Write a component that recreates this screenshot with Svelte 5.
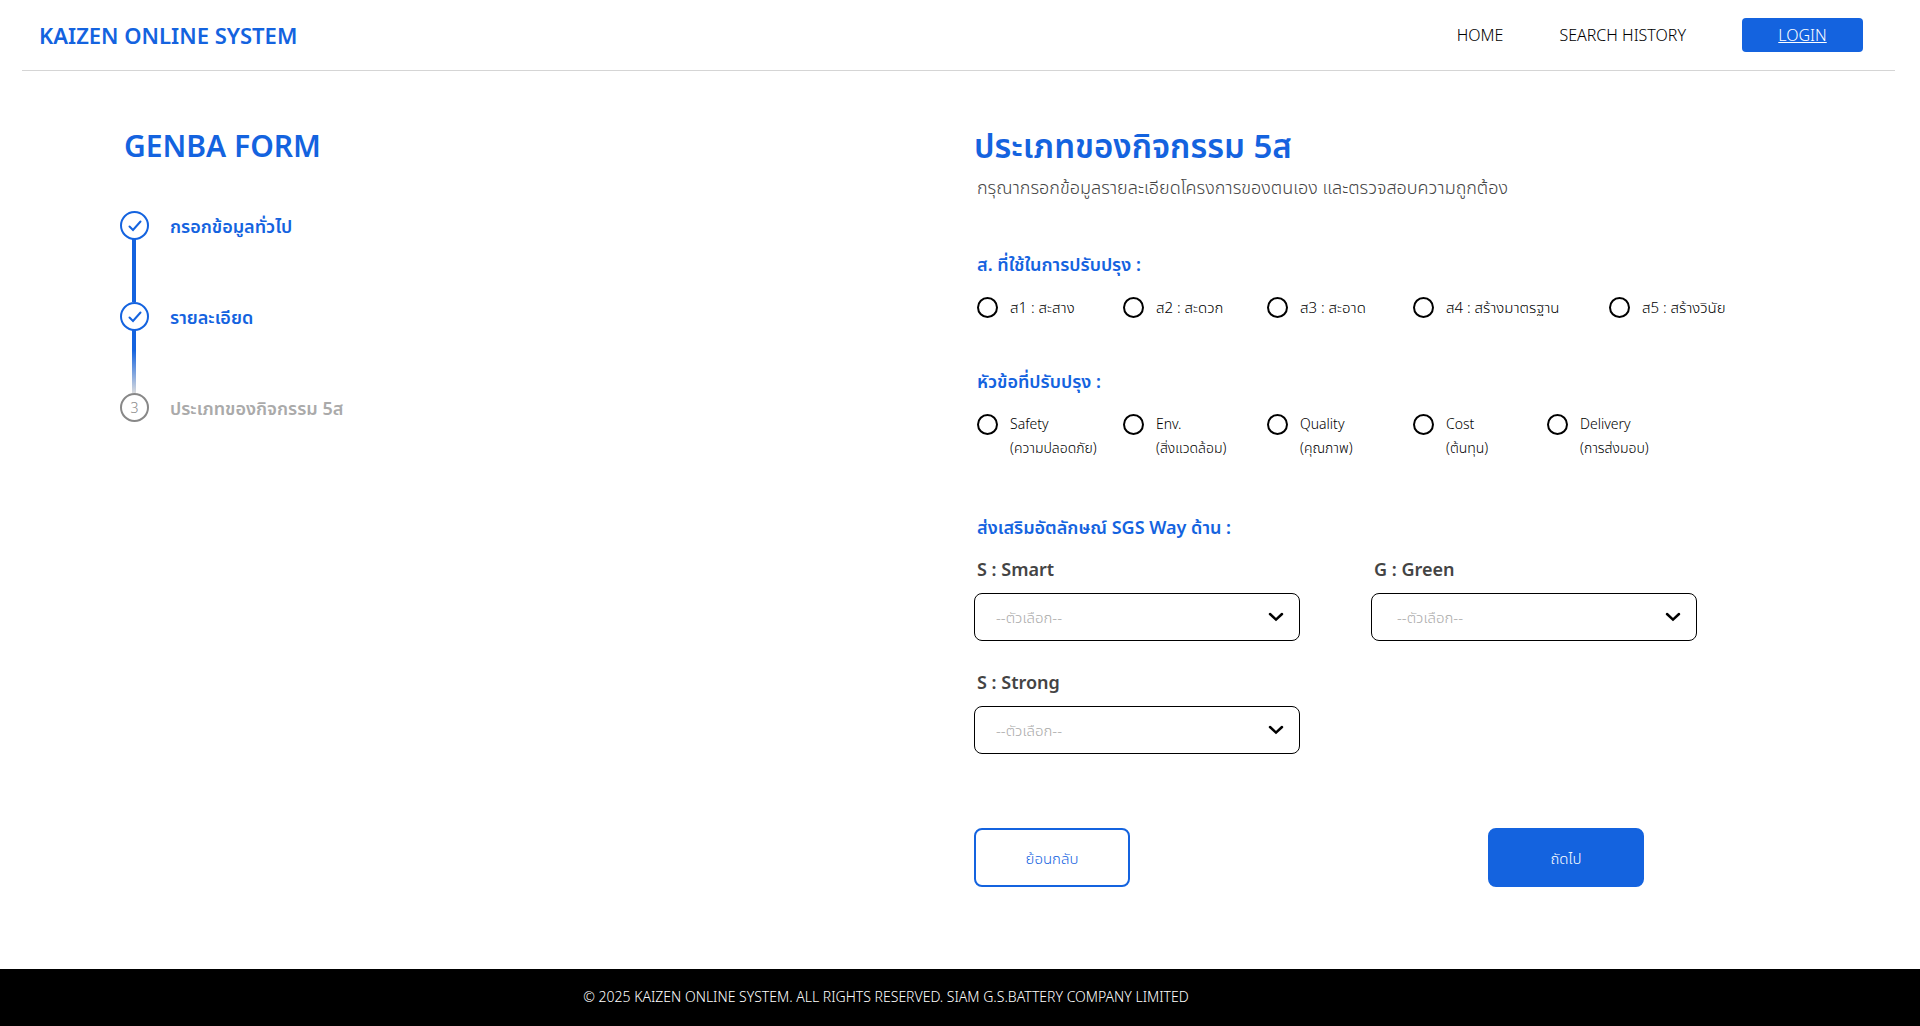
<script>
  const steps = [
    { label: 'กรอกข้อมูลทั่วไป', done: true },
    { label: 'รายละเอียด', done: true },
    { label: 'ประเภทของกิจกรรม 5ส', done: false }
  ];
  const fiveS = ['ส1 : สะสาง', 'ส2 : สะดวก', 'ส3 : สะอาด', 'ส4 : สร้างมาตรฐาน', 'ส5 : สร้างวินัย'];
  const topics = [
    ['Safety', '(ความปลอดภัย)'],
    ['Env.', '(สิ่งแวดล้อม)'],
    ['Quality', '(คุณภาพ)'],
    ['Cost', '(ต้นทุน)'],
    ['Delivery', '(การส่งมอบ)']
  ];
  const ways = [
    { id: 'smart', label: 'S : Smart' },
    { id: 'green', label: 'G : Green' },
    { id: 'strong', label: 'S : Strong' }
  ];
</script>

<div class="page">
  <header>
    <a class="brand" href="#home">KAIZEN ONLINE SYSTEM</a>
    <nav>
      <a href="#home">HOME</a>
      <a href="#history">SEARCH HISTORY</a>
      <a class="login" href="#login">LOGIN</a>
    </nav>
  </header>

  <main>
    <aside>
      <h1>GENBA FORM</h1>
      <ol>
        {#each steps as step, i}
          <li class:done={step.done} class:fade={i === 1}>
            <span class="mark">
              {#if step.done}
                <svg viewBox="0 0 14 12" width="14" height="12" aria-hidden="true"><path d="M1.5 6.5 5 10 12.5 1.5" /></svg>
              {:else}
                {i + 1}
              {/if}
            </span>
            <span class="step">{step.label}</span>
          </li>
        {/each}
      </ol>
    </aside>

    <form>
      <h2>ประเภทของกิจกรรม 5ส</h2>
      <p class="lead">กรุณากรอกข้อมูลรายละเอียดโครงการของตนเอง และตรวจสอบความถูกต้อง</p>

      <fieldset>
        <legend>ส. ที่ใช้ในการปรับปรุง :</legend>
        <div class="options wide">
          {#each fiveS as item}
            <label><input type="radio" name="fiveS" value={item} /><span>{item}</span></label>
          {/each}
        </div>
      </fieldset>

      <fieldset class="second">
        <legend>หัวข้อที่ปรับปรุง :</legend>
        <div class="options">
          {#each topics as [name, thai]}
            <label><input type="radio" name="topic" value={name} /><span>{name}<br />{thai}</span></label>
          {/each}
        </div>
      </fieldset>

      <fieldset>
        <legend>ส่งเสริมอัตลักษณ์ SGS Way ด้าน :</legend>
        <div class="ways">
          {#each ways as way}
            <div class="field">
              <label for={way.id}>{way.label}</label>
              <div class="select">
                <select id={way.id} class={way.id}><option>--ตัวเลือก--</option></select>
                <svg viewBox="0 0 16 10" width="16" height="10" aria-hidden="true"><path d="M2 2 8 7.6 14 2" /></svg>
              </div>
            </div>
          {/each}
        </div>
      </fieldset>

      <div class="actions">
        <button type="button" class="back">ย้อนกลับ</button>
        <button type="button" class="next">ถัดไป</button>
      </div>
    </form>
  </main>

  <footer>© 2025 KAIZEN ONLINE SYSTEM. ALL RIGHTS RESERVED. SIAM G.S.BATTERY COMPANY LIMITED</footer>
</div>

<style>
  :global(body) {
    margin: 0;
    background: #fff;
  }
  .page {
    --blue: #1463df;
    min-height: 100vh;
    display: flex;
    flex-direction: column;
    font-family: 'Noto Sans', 'Noto Sans Thai', sans-serif;
    font-size: 14px;
    line-height: 24px;
    color: #000;
  }
  .page * {
    box-sizing: border-box;
  }
  header {
    display: flex;
    align-items: center;
    justify-content: space-between;
    margin: 0 25px 0 22px;
    padding: 18px 32px 18px 17px;
    border-bottom: 1px solid #d5d5d5;
  }
  a {
    color: inherit;
    text-decoration: none;
  }
  .brand {
    color: var(--blue);
    font-size: 22px;
    font-weight: 600;
  }
  nav {
    display: flex;
    align-items: center;
    gap: 56px;
    font-size: 16px;
    font-weight: 300;
  }
  nav .login {
    width: 121px;
    height: 34px;
    line-height: 34px;
    border-radius: 4px;
    background: var(--blue);
    color: #fff;
    text-align: center;
    text-decoration: underline;
  }
  main {
    flex: 1;
    display: grid;
    grid-template-columns: 854fr 946fr;
    padding: 51px 0 82px 120px;
  }
  h1,
  h2 {
    margin: 0;
    color: var(--blue);
    font-size: 33px;
    line-height: 48px;
    font-weight: 600;
  }
  h1 {
    padding-left: 4px;
    font-size: 30px;
  }
  ol {
    list-style: none;
    margin: 0;
    padding: 41px 0 0;
  }
  li {
    display: grid;
    grid-template-columns: 29px 1fr;
    column-gap: 21px;
    align-items: start;
    color: #aaa;
  }
  li.done {
    min-height: 91px;
    color: var(--blue);
    background: linear-gradient(var(--blue), var(--blue)) 12px 28px / 4px 100% no-repeat;
  }
  li.fade {
    background-image: linear-gradient(var(--blue) 20px, #ddd 64px);
  }
  .mark {
    width: 29px;
    height: 29px;
    display: flex;
    align-items: center;
    justify-content: center;
    border: 2px solid #888;
    border-radius: 50%;
    background: #fff;
    color: #888;
    font-size: 14px;
    font-weight: 300;
  }
  .done .mark {
    border-color: var(--blue);
    color: var(--blue);
  }
  svg path {
    fill: none;
    stroke: currentColor;
    stroke-width: 2;
    stroke-linecap: round;
  }
  .step {
    font-size: 18px;
    line-height: 30px;
    font-weight: 600;
  }
  .lead {
    margin: 0 0 0 3px;
    color: #444;
    font-size: 18px;
    line-height: 34px;
    font-weight: 300;
  }
  fieldset {
    border: 0;
    margin: 0;
    padding: 0 0 0 3px;
    min-width: 0;
  }
  legend {
    padding: 0;
    color: var(--blue);
    font-size: 18px;
    line-height: 30px;
    font-weight: 600;
  }
  form {
    display: flex;
    flex-direction: column;
  }
  .lead + fieldset {
    margin-top: 45px;
  }
  .second {
    margin: 47px 0 52px;
  }
  .options {
    display: grid;
    grid-template-columns: 146fr 144fr 146fr 134fr 373fr;
    padding-top: 16px;
    font-weight: 300;
  }
  .options.wide {
    grid-template-columns: 146fr 144fr 146fr 196fr 311fr;
    font-size: 15px;
  }
  .options label {
    display: flex;
    gap: 12px;
    align-items: flex-start;
    white-space: nowrap;
  }
  input {
    appearance: none;
    flex: none;
    width: 21px;
    height: 21px;
    margin: 2px 0 0;
    border: 2px solid #000;
    border-radius: 50%;
  }
  input:checked {
    background: radial-gradient(#000 5px, transparent 6px);
  }
  .ways {
    display: grid;
    grid-template-columns: 326px 326px;
    gap: 26px 71px;
    margin-left: -3px;
    padding-top: 12px;
  }
  .field label {
    display: block;
    padding: 0 0 9px 3px;
    color: #444;
    font-size: 18px;
    line-height: 30px;
    font-weight: 600;
  }
  .select {
    display: grid;
    align-items: center;
  }
  .select > * {
    grid-area: 1 / 1;
  }
  .select svg {
    justify-self: end;
    margin-right: 16px;
    pointer-events: none;
  }
  .select path {
    stroke-width: 2.5;
  }
  select {
    appearance: none;
    width: 100%;
    height: 48px;
    padding: 0 40px 0 21px;
    border: 1px solid #000;
    border-radius: 8px;
    background: #fff;
    color: #aaa;
    font: inherit;
    font-size: 15px;
    font-weight: 300;
  }
  .green {
    padding-left: 25px;
  }
  .actions {
    display: flex;
    justify-content: space-between;
    width: 670px;
    padding-top: 74px;
  }
  button {
    width: 156px;
    height: 59px;
    border: 2px solid var(--blue);
    border-radius: 8px;
    background: #fff;
    color: var(--blue);
    font: inherit;
    font-size: 15px;
    font-weight: 300;
  }
  .next {
    background: var(--blue);
    color: #fff;
  }
  footer {
    padding: 16px 148px 17px 0;
    background: #000;
    color: #fff;
    text-align: center;
    font-size: 14px;
    font-weight: 300;
  }
</style>
